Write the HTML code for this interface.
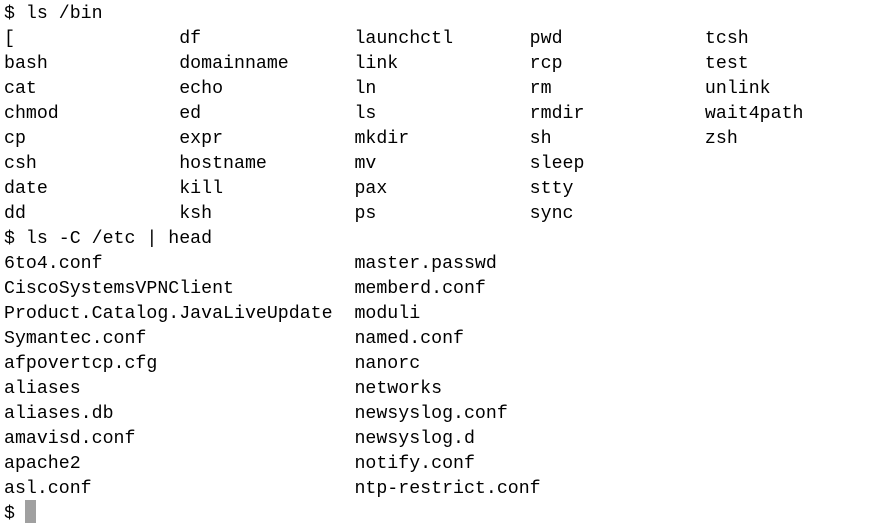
<!DOCTYPE html>
<html><head><meta charset="utf-8"><style>
html,body{margin:0;padding:0;background:#fff;width:886px;height:530px;overflow:hidden}
pre{margin:0;position:absolute;left:4px;top:2px;font-family:"Liberation Mono",monospace;font-size:18.25px;line-height:25px;color:#000}
.cur{position:absolute;left:25px;top:500px;width:11px;height:23px;background:#a0a0a0}
</style></head><body>
<pre>$ ls /bin
[               df              launchctl       pwd             tcsh
bash            domainname      link            rcp             test
cat             echo            ln              rm              unlink
chmod           ed              ls              rmdir           wait4path
cp              expr            mkdir           sh              zsh
csh             hostname        mv              sleep
date            kill            pax             stty
dd              ksh             ps              sync
$ ls -C /etc | head
6to4.conf                       master.passwd
CiscoSystemsVPNClient           memberd.conf
Product.Catalog.JavaLiveUpdate  moduli
Symantec.conf                   named.conf
afpovertcp.cfg                  nanorc
aliases                         networks
aliases.db                      newsyslog.conf
amavisd.conf                    newsyslog.d
apache2                         notify.conf
asl.conf                        ntp-restrict.conf
$ </pre>
<div class="cur"></div>
</body></html>
